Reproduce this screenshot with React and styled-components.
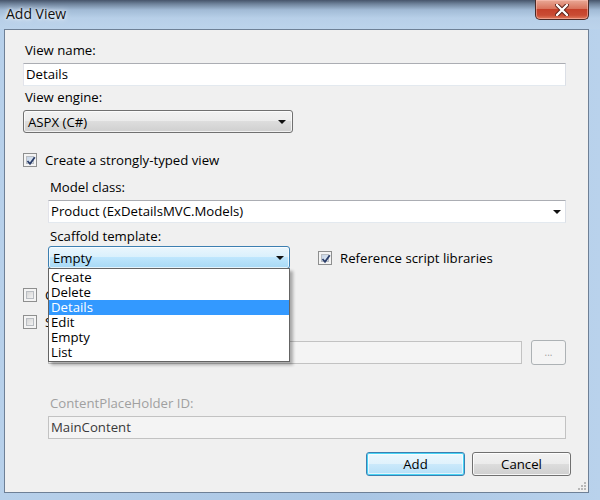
import React from "react";
import styled, { createGlobalStyle, css } from "styled-components";

const Global = createGlobalStyle`
  html, body { margin: 0; padding: 0; }
  body { width: 600px; height: 500px; overflow: hidden; background: #8fb0d4; }
  * { box-sizing: border-box; }
`;

const FONT = `"Open Sans", "Noto Sans", "Liberation Sans", sans-serif`;

const Window = styled.div`
  width: 600px;
  height: 500px;
  display: flex;
  flex-direction: column;
  font-family: ${FONT};
  font-size: 13.2px;
  color: #000;
  background: linear-gradient(90deg, #b7d0ea 0%, #aac6e4 60%, #b9d2ec 100%);
`;

const TitleBar = styled.div`
  height: 29px;
  flex: none;
  display: flex;
  justify-content: space-between;
  align-items: flex-start;
  background: linear-gradient(
    180deg,
    #46546a 0px,
    #6f839b 4px,
    #a2bbd6 10px,
    #b7cfe8 18px,
    #bcd3eb 29px
  );
`;

const Title = styled.div`
  margin: 5px 0 0 6px;
  font-size: 14px;
  line-height: 18px;
  color: #111;
  text-shadow: 0 0 6px rgba(255, 255, 255, 0.9), 0 0 3px rgba(255, 255, 255, 0.9);
`;

const CloseButton = styled.div`
  width: 54px;
  height: 20px;
  margin-right: 11px;
  border: 1px solid #4a2a26;
  border-top: none;
  border-radius: 0 0 5px 5px;
  display: flex;
  align-items: center;
  justify-content: center;
  background: linear-gradient(
    180deg,
    #e9a996 0%,
    #d9745d 45%,
    #c5412a 50%,
    #c94c34 80%,
    #e07c5e 100%
  );
  box-shadow: inset 0 0 0 1px rgba(255, 200, 190, 0.5);
`;

const Frame = styled.div`
  flex: 1;
  display: flex;
  padding: 0 11px 7px 4px;
`;

const Client = styled.div`
  flex: 1;
  position: relative;
  background: #f0f0f0;
  border: 1px solid #6e8096;
  padding: 0 22px 0 18px;
  display: flex;
  flex-direction: column;
`;

const Label = styled.div`
  margin-top: ${(p) => p.$mt || 0}px;
  padding-left: ${(p) => (p.$indent ? 27 : 2)}px;
  line-height: 16px;
  height: 16px;
  color: ${(p) => (p.$disabled ? "#a0a0a0" : "#000")};
  white-space: nowrap;
`;

const TextBox = styled.div`
  margin-top: ${(p) => p.$mt || 0}px;
  margin-left: ${(p) => (p.$indent ? 25 : 0)}px;
  height: 23px;
  flex: ${(p) => (p.$grow ? 1 : "none")};
  border: 1px solid #abadb3;
  border-color: #abadb3 #dbdfe6 #e3e9ef #e2e3ea;
  background: ${(p) => (p.$disabled ? "#f4f4f4" : "#fff")};
  ${(p) =>
    p.$disabled &&
    css`
      border-color: #c2c2c2;
    `}
  padding-left: 2px;
  line-height: 21px;
  color: ${(p) => (p.$muted ? "#3a3a3a" : "#000")};
  display: flex;
  align-items: center;
  justify-content: space-between;
`;

const Arrow = styled.span`
  width: 0;
  height: 0;
  border-left: 4px solid transparent;
  border-right: 4px solid transparent;
  border-top: 4px solid #111;
  margin-right: ${(p) => p.$mr || 6}px;
`;

const DropList = styled.div`
  margin-top: ${(p) => p.$mt || 0}px;
  width: ${(p) => p.$w}px;
  height: 23px;
  flex: none;
  border: 1px solid ${(p) => (p.$hot ? "#3c7fb1" : "#707070")};
  border-radius: 3px;
  padding-left: 4px;
  display: flex;
  align-items: center;
  justify-content: space-between;
  background: ${(p) =>
    p.$hot
      ? "linear-gradient(180deg, #eaf6fd 0%, #d9f0fc 50%, #bee6fd 50%, #a7d9f5 100%)"
      : "linear-gradient(180deg, #f2f2f2 0%, #ebebeb 50%, #dddddd 50%, #cfcfcf 100%)"};
  box-shadow: inset 0 0 0 1px rgba(255, 255, 255, 0.7);
`;

const CheckRow = styled.div`
  margin-top: ${(p) => p.$mt || 0}px;
  display: flex;
  align-items: center;
  gap: 8px;
  height: 16px;
  line-height: 16px;
  white-space: nowrap;
`;

const Box = styled.span`
  width: 14px;
  height: 14px;
  flex: none;
  border: 1px solid #8e8f8f;
  background: #f4f4f4;
  padding: 2px;
  display: flex;
`;

const BoxInner = styled.span`
  flex: 1;
  border: 1px solid #b9bdc2;
  background: ${(p) =>
    p.$checked
      ? "linear-gradient(135deg, #c6d4e6 0%, #e3ecf6 100%)"
      : "linear-gradient(135deg, #d6d6d6 0%, #f2f2f2 100%)"};
  position: relative;
  display: flex;
  align-items: center;
  justify-content: center;
`;

const CheckMark = styled.svg`
  position: absolute;
  left: -1px;
  top: -1px;
`;

const Indent = styled.div`
  padding-left: 25px;
  display: flex;
  flex-direction: column;
`;

const ScaffoldRow = styled.div`
  margin-top: 2px;
  display: flex;
  align-items: center;
  gap: 28px;
  position: relative;
`;

const Popup = styled.div`
  position: absolute;
  left: 0;
  top: 22px;
  width: 242px;
  background: #fff;
  border: 1px solid #646464;
  padding: 1px 0 1px;
  box-shadow: 3px 3px 3px rgba(0, 0, 0, 0.3);
  z-index: 5;
`;

const Item = styled.div`
  height: 15px;
  line-height: 15px;
  padding-left: 2px;
  background: ${(p) => (p.$sel ? "#3399ff" : "transparent")};
  color: ${(p) => (p.$sel ? "#fff" : "#000")};
`;

const BrowseRow = styled.div`
  margin-top: 10px;
  padding-left: 25px;
  display: flex;
  align-items: center;
  gap: 9px;
`;

const SmallButton = styled.div`
  width: 35px;
  height: 25px;
  border: 1px solid #adb2b5;
  border-radius: 3px;
  background: #f4f4f4;
  color: #a0a0a0;
  display: flex;
  align-items: center;
  justify-content: center;
  font-size: 10px;
  line-height: 1;
  padding-bottom: 2px;
`;

const ButtonRow = styled.div`
  margin-top: 13px;
  margin-right: -5px;
  display: flex;
  justify-content: flex-end;
  gap: 7px;
`;

const Button = styled.div`
  width: 99px;
  height: 24px;
  border-radius: 3px;
  display: flex;
  align-items: center;
  justify-content: center;
  border: 1px solid ${(p) => (p.$default ? "#3c7fb1" : "#707070")};
  background: ${(p) =>
    p.$default
      ? "linear-gradient(180deg, #ecf7fd 0%, #e0f2fc 50%, #cbe9fb 50%, #b6dff7 100%)"
      : "linear-gradient(180deg, #f2f2f2 0%, #ebebeb 50%, #dddddd 50%, #cfcfcf 100%)"};
  box-shadow: ${(p) =>
    p.$default
      ? "inset 0 0 0 1px #48d4f5, inset 0 0 0 2px rgba(255,255,255,0.6)"
      : "inset 0 0 0 1px rgba(255,255,255,0.8)"};
`;

const Grip = styled.svg`
  position: absolute;
  right: 1px;
  bottom: 1px;
`;

function CheckBox({ checked }) {
  return (
    <Box>
      <BoxInner $checked={checked}>
        {checked && (
          <CheckMark width="10" height="10" viewBox="0 0 10 10">
            <path d="M1.5 5 L4 7.8 L8.8 1.2" fill="none" stroke="#2b3e6a" strokeWidth="1.8" />
          </CheckMark>
        )}
      </BoxInner>
    </Box>
  );
}

export default function App() {
  return (
    <>
      <Global />
      <Window>
        <TitleBar>
          <Title>Add View</Title>
          <CloseButton>
            <svg width="14" height="12" viewBox="0 0 14 12">
              <path d="M2 1 L12 11 M12 1 L2 11" stroke="#5a2018" strokeWidth="4.2" strokeLinecap="round" />
              <path d="M2 1 L12 11 M12 1 L2 11" stroke="#fff" strokeWidth="2.4" strokeLinecap="round" />
            </svg>
          </CloseButton>
        </TitleBar>
        <Frame>
          <Client>
            <Label $mt={12}>View name:</Label>
            <TextBox $mt={5}>Details</TextBox>
            <Label $mt={3}>View engine:</Label>
            <DropList $mt={5} $w={270}>
              <span>ASPX (C#)</span>
              <Arrow />
            </DropList>
            <CheckRow $mt={19}>
              <CheckBox checked />
              <span>Create a strongly-typed view</span>
            </CheckRow>
            <Indent>
              <Label $mt={11}>Model class:</Label>
              <TextBox $mt={5}>
                <span>Product (ExDetailsMVC.Models)</span>
                <Arrow $mr={4} />
              </TextBox>
              <Label $mt={5}>Scaffold template:</Label>
              <ScaffoldRow>
                <DropList $w={242} $hot>
                  <span>Empty</span>
                  <Arrow $mr={5} />
                </DropList>
                <CheckRow>
                  <CheckBox checked />
                  <span>Reference script libraries</span>
                </CheckRow>
                <Popup>
                  <Item>Create</Item>
                  <Item>Delete</Item>
                  <Item $sel>Details</Item>
                  <Item>Edit</Item>
                  <Item>Empty</Item>
                  <Item>List</Item>
                </Popup>
              </ScaffoldRow>
            </Indent>
            <CheckRow $mt={18}>
              <CheckBox />
              <span>Create a partial view (.ascx)</span>
            </CheckRow>
            <CheckRow $mt={11}>
              <CheckBox />
              <span>Select master page</span>
            </CheckRow>
            <BrowseRow>
              <TextBox $disabled $grow />
              <SmallButton>...</SmallButton>
            </BrowseRow>
            <Label $mt={30} $indent $disabled>
              ContentPlaceHolder ID:
            </Label>
            <TextBox $mt={5} $indent $disabled $muted>
              MainContent
            </TextBox>
            <ButtonRow>
              <Button $default>Add</Button>
              <Button>Cancel</Button>
            </ButtonRow>
            <Grip width="10" height="10" viewBox="0 0 10 10">
              {[
                [8, 2],
                [8, 5],
                [5, 5],
                [8, 8],
                [5, 8],
                [2, 8],
              ].map(([x, y]) => (
                <rect key={`${x}-${y}`} x={x - 1} y={y - 1} width="2" height="2" fill="#b8b8b8" />
              ))}
            </Grip>
          </Client>
        </Frame>
      </Window>
    </>
  );
}
